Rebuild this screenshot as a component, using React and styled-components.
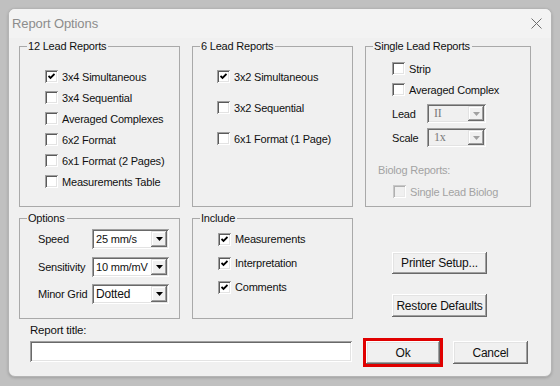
import React from 'react';
import styled, { createGlobalStyle } from 'styled-components';

const GlobalStyle = createGlobalStyle`
  html, body {
    margin: 0;
    padding: 0;
    background: #c0c0c0;
  }
  body {
    font-family: "Liberation Sans", Arial, sans-serif;
    font-size: 11px;
    color: #111;
  }
`;

const Desktop = styled.div`
  width: 560px;
  height: 386px;
  padding: 8px;
  box-sizing: border-box;
  background: #c0c0c0;
`;

const Dialog = styled.div`
  width: 544px;
  height: 369px;
  box-sizing: border-box;
  border: 1px solid #b4b4b4;
  border-radius: 7px;
  background: #f0f0f0;
  box-shadow: 0 1px 3px rgba(0, 0, 0, 0.18);
  overflow: hidden;
`;

const TitleBar = styled.div`
  height: 29px;
  display: flex;
  align-items: center;
  justify-content: space-between;
  padding: 0 9px 0 3px;
  background: #f3f3f3;
  font-size: 13px;
  color: #8c8c8c;
  letter-spacing: -0.1px;
`;

const Body = styled.div`
  padding: 2px 0 0 10px;
  display: grid;
  grid-template-columns: 161px 161px 166px;
  grid-template-rows: 167px 107px auto;
  column-gap: 12px;
  row-gap: 5px;
  letter-spacing: -0.2px;
`;

const Group = styled.fieldset`
  margin: 0;
  min-width: 0;
  box-sizing: border-box;
  border: 1px solid #a9a9a9;
  padding: 0;
`;

const Caption = styled.legend`
  margin-left: 7px;
  padding: 0 2px 0 1px;
  font-size: 11px;
  line-height: 13px;
`;

const GroupContent = styled.div`
  padding: ${p => p.$pt}px 0 0 ${p => p.$pl}px;
`;

const Row = styled.div`
  display: flex;
  align-items: center;
  gap: 4px;
  height: ${p => p.$h}px;
  color: ${p => (p.$disabled ? '#a3a3a3' : '#111')};
`;

const Box = styled.span`
  width: 13px;
  height: 13px;
  flex: none;
  box-sizing: border-box;
  display: flex;
  align-items: center;
  justify-content: center;
  background: ${p => (p.$disabled ? '#f0f0f0' : '#fff')};
  box-shadow: ${p =>
    p.$disabled
      ? 'inset 1px 1px #c8c8c8, inset -1px -1px #fff, inset 2px 2px #b0b0b0, inset -2px -2px #e8e8e8'
      : 'inset 1px 1px #a0a0a0, inset -1px -1px #fff, inset 2px 2px #5a5a5a, inset -2px -2px #e3e3e3'};
`;

function Check({ label, checked, disabled, h }) {
  return (
    <Row $h={h} $disabled={disabled}>
      <Box $disabled={disabled}>
        {checked && (
          <svg width="7" height="7" viewBox="0 0 7 7">
            <path d="M0.5 3 L2.5 5 L6.5 1" fill="none" stroke="#000" strokeWidth="1.8" />
          </svg>
        )}
      </Box>
      <span>{label}</span>
    </Row>
  );
}

const FieldRow = styled.div`
  display: flex;
  align-items: center;
  margin-top: ${p => p.$mt}px;
`;

const FieldLabel = styled.span`
  width: ${p => p.$w}px;
  flex: none;
`;

const Combo = styled.div`
  width: ${p => p.$w}px;
  height: ${p => p.$h}px;
  box-sizing: border-box;
  display: flex;
  align-items: stretch;
  padding: 2px;
  background: ${p => (p.$disabled ? '#f0f0f0' : '#fff')};
  box-shadow: inset 1px 1px #a0a0a0, inset -1px -1px #fff, inset 2px 2px #696969, inset -2px -2px #e3e3e3;
`;

const ComboValue = styled.span`
  flex: 1;
  display: flex;
  align-items: center;
  padding-left: ${p => (p.$disabled ? 5 : 2)}px;
  font-family: ${p => (p.$disabled ? '"Liberation Serif", "Times New Roman", serif' : 'inherit')};
  font-size: ${p => (p.$disabled ? 12 : p.$fs)}px;
  color: ${p => (p.$disabled ? '#7a7a7a' : '#111')};
  white-space: nowrap;
  overflow: hidden;
`;

const ComboButton = styled.span`
  width: 16px;
  flex: none;
  display: flex;
  align-items: center;
  justify-content: center;
  background: #f0f0f0;
  box-shadow: inset -1px -1px #696969, inset 1px 1px #e3e3e3, inset -2px -2px #a0a0a0, inset 2px 2px #fff;
`;

function Select({ value, w, h = 20, fs = 11, disabled }) {
  return (
    <Combo $w={w} $h={h} $disabled={disabled}>
      <ComboValue $disabled={disabled} $fs={fs}>{value}</ComboValue>
      <ComboButton>
        <svg width="7" height="4" viewBox="0 0 7 4">
          <path d="M0 0 H7 L3.5 4 Z" fill={disabled ? '#a0a0a0' : '#000'} />
        </svg>
      </ComboButton>
    </Combo>
  );
}

const Indent = styled.div`
  padding-left: ${p => p.$pl}px;
  margin-top: ${p => p.$mt || 0}px;
`;

const SubHeading = styled.div`
  margin-top: ${p => p.$mt}px;
  line-height: 13px;
  color: #a3a3a3;
`;

const ButtonColumn = styled.div`
  display: flex;
  flex-direction: column;
  gap: 20px;
  padding: 40px 0 0 27px;
`;

const Button = styled.button`
  width: ${p => p.$w}px;
  height: ${p => p.$h}px;
  border: none;
  background: #f0f0f0;
  font-family: "Liberation Sans", Arial, sans-serif;
  font-size: 12px;
  letter-spacing: -0.2px;
  color: #111;
  padding: 0;
  box-shadow: inset -1px -1px #696969, inset 1px 1px #fff, inset -2px -2px #a0a0a0, inset 2px 2px #e3e3e3;
  outline: ${p => (p.$focused ? '3px solid #e00000' : 'none')};
`;

const TitleField = styled.div`
  grid-column: 1 / 3;
  padding: 0 0 0 11px;
  display: flex;
  flex-direction: column;
  gap: 4px;
`;

const TitleLabel = styled.span`
  line-height: 13px;
  font-size: 11.5px;
`;

const TextBox = styled.div`
  width: 322px;
  height: 21px;
  background: #fff;
  box-shadow: inset 1px 1px #a0a0a0, inset -1px -1px #fff, inset 2px 2px #696969, inset -2px -2px #e3e3e3;
`;

const ActionRow = styled.div`
  display: flex;
  gap: 13px;
  padding: 17px 0 0 1px;
`;

export default function App() {
  return (
    <>
      <GlobalStyle />
      <Desktop>
        <Dialog>
          <TitleBar>
            <span>Report Options</span>
            <svg width="11" height="11" viewBox="0 0 11 11">
              <path d="M0.5 0.5 L10.5 10.5 M10.5 0.5 L0.5 10.5" stroke="#6e6e6e" strokeWidth="1" />
            </svg>
          </TitleBar>
          <Body>
            <Group>
              <Caption>12 Lead Reports</Caption>
              <GroupContent $pt={13} $pl={25}>
                <Check h={21} checked label="3x4 Simultaneous" />
                <Check h={21} label="3x4 Sequential" />
                <Check h={21} label="Averaged Complexes" />
                <Check h={21} label="6x2 Format" />
                <Check h={21} label="6x1 Format (2 Pages)" />
                <Check h={21} label="Measurements Table" />
              </GroupContent>
            </Group>
            <Group>
              <Caption>6 Lead Reports</Caption>
              <GroupContent $pt={8} $pl={24}>
                <Check h={31} checked label="3x2 Simultaneous" />
                <Check h={31} label="3x2 Sequential" />
                <Check h={31} label="6x1 Format (1 Page)" />
              </GroupContent>
            </Group>
            <Group>
              <Caption>Single Lead Reports</Caption>
              <GroupContent $pt={5} $pl={12}>
                <Indent $pl={14}>
                  <Check h={21} label="Strip" />
                  <Check h={21} label="Averaged Complex" />
                  <FieldRow $mt={4}>
                    <FieldLabel $w={35}>Lead</FieldLabel>
                    <Select w={59} h={19} value="II" disabled />
                  </FieldRow>
                  <FieldRow $mt={5}>
                    <FieldLabel $w={35}>Scale</FieldLabel>
                    <Select w={59} h={19} value="1x" disabled />
                  </FieldRow>
                </Indent>
                <SubHeading $mt={17}>Biolog Reports:</SubHeading>
                <Indent $pl={15} $mt={4}>
                  <Check h={21} disabled label="Single Lead Biolog" />
                </Indent>
              </GroupContent>
            </Group>
            <Group>
              <Caption>Options</Caption>
              <GroupContent $pt={4} $pl={18}>
                <FieldRow $mt={0}>
                  <FieldLabel $w={54}>Speed</FieldLabel>
                  <Select w={77} value="25 mm/s" />
                </FieldRow>
                <FieldRow $mt={8}>
                  <FieldLabel $w={54}>Sensitivity</FieldLabel>
                  <Select w={77} value="10 mm/mV" />
                </FieldRow>
                <FieldRow $mt={7}>
                  <FieldLabel $w={54}>Minor Grid</FieldLabel>
                  <Select w={77} value="Dotted" fs={12} />
                </FieldRow>
              </GroupContent>
            </Group>
            <Group>
              <Caption>Include</Caption>
              <GroupContent $pt={2} $pl={25}>
                <Check h={24} checked label="Measurements" />
                <Check h={24} checked label="Interpretation" />
                <Check h={24} checked label="Comments" />
              </GroupContent>
            </Group>
            <ButtonColumn>
              <Button $w={95} $h={22}>Printer Setup...</Button>
              <Button $w={95} $h={23}>Restore Defaults</Button>
            </ButtonColumn>
            <TitleField>
              <TitleLabel>Report title:</TitleLabel>
              <TextBox />
            </TitleField>
            <ActionRow>
              <Button $w={74} $h={23} $focused>Ok</Button>
              <Button $w={75} $h={23}>Cancel</Button>
            </ActionRow>
          </Body>
        </Dialog>
      </Desktop>
    </>
  );
}
